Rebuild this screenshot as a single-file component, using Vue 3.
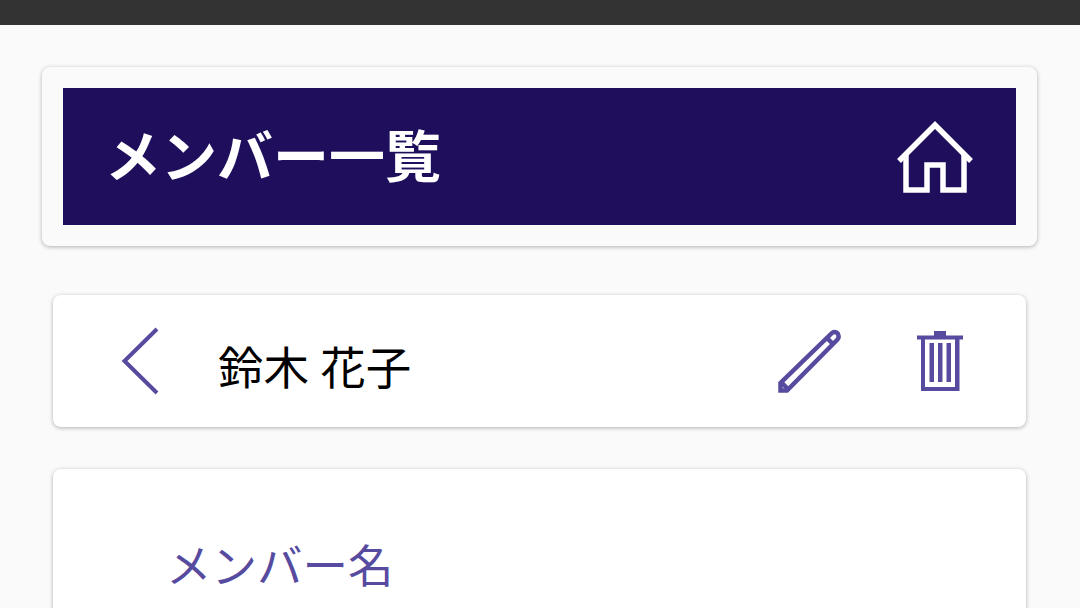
<script setup>
const memberName = "鈴木 花子";
</script>

<template>
  <div class="page">
    <div class="status-bar"></div>
    <main class="content">
      <section class="header-card">
        <div class="header">
          <h1 class="title">メンバー一覧</h1>
          <svg class="home-icon" viewBox="895 119 80 76" fill="none" stroke="#fff" stroke-width="5.5">
            <path d="M899 161 L935 125 L971 161" />
            <path d="M906 154 V190 H927 V165 H943 V190 H964 V154" />
          </svg>
        </div>
      </section>

      <section class="name-card">
        <svg class="back-icon" viewBox="118 325 44 72" fill="none" stroke="#574b9f" stroke-width="4">
          <path d="M157 329 L124.500 361 L157 393" />
        </svg>
        <span class="name">{{ memberName }}</span>
        <svg class="edit-icon" viewBox="775 326 68 68" fill="none" stroke="#574b9f" stroke-width="4.5">
          <path d="M780.500 389.500 V382 L832 332 C835 330 838 331.500 838.500 334.500 C839 336.500 838 338 837 339 L787 389.500 Z" />
          <path d="M827 337 L834 344" />
          <path d="M781 381 L788 388" />
        </svg>
        <svg class="trash-icon" viewBox="915 329 50 64" fill="#574b9f">
          <rect x="917" y="335.500" width="46" height="4" />
          <rect x="934" y="331" width="12" height="5" />
          <rect x="929.500" y="343" width="4.500" height="39" />
          <rect x="938" y="343" width="4.500" height="39" />
          <rect x="946.500" y="343" width="4.500" height="39" />
          <path d="M921 339 H925 V387 H955 V339 H959.500 V391 H921 Z" />
        </svg>
      </section>

      <section class="detail-card">
        <h2 class="label">メンバー名</h2>
      </section>
    </main>
  </div>
</template>

<style scoped>
.page {
  height: 608px;
  overflow: hidden;
  background: #fafafa;
  font-family: Roboto, "Noto Sans CJK JP", sans-serif;
}

.status-bar {
  height: 25px;
  background: #333;
}

.content {
  display: flex;
  flex-direction: column;
  padding: 42px 43px 0 42px;
}

.header-card {
  padding: 21px;
  border-radius: 8px;
  background: #fafafa;
  box-shadow: 0 1px 4px rgba(0, 0, 0, 0.3);
}

.header {
  display: flex;
  align-items: center;
  justify-content: space-between;
  height: 137px;
  padding: 0 41px 0 42px;
  background: #1f0e5c;
}

.title {
  margin: 0 0 8px;
  font-size: 56px;
  font-weight: 700;
  color: #fff;
}

.home-icon {
  width: 80px;
  height: 76px;
}

.name-card {
  display: flex;
  align-items: center;
  height: 132px;
  margin: 49px 11px 0;
  padding-left: 65px;
  border-radius: 8px;
  background: #fff;
  box-shadow: 0 1px 4px rgba(0, 0, 0, 0.3);
}

.back-icon {
  width: 44px;
  height: 72px;
}

.name {
  margin: 8px 0 0 56px;
  font-size: 45.5px;
  color: #000;
}

.edit-icon {
  width: 68px;
  height: 68px;
  margin-left: auto;
}

.trash-icon {
  width: 50px;
  height: 64px;
  margin-left: 72px;
  margin-right: 61px;
}

.detail-card {
  height: 300px;
  margin: 42px 11px 0;
  padding: 61px 0 0 113px;
  border-radius: 8px;
  background: #fff;
  box-shadow: 0 1px 4px rgba(0, 0, 0, 0.3);
}

.label {
  margin: 0;
  font-size: 45.5px;
  font-weight: 400;
  color: #574b9f;
}
</style>
